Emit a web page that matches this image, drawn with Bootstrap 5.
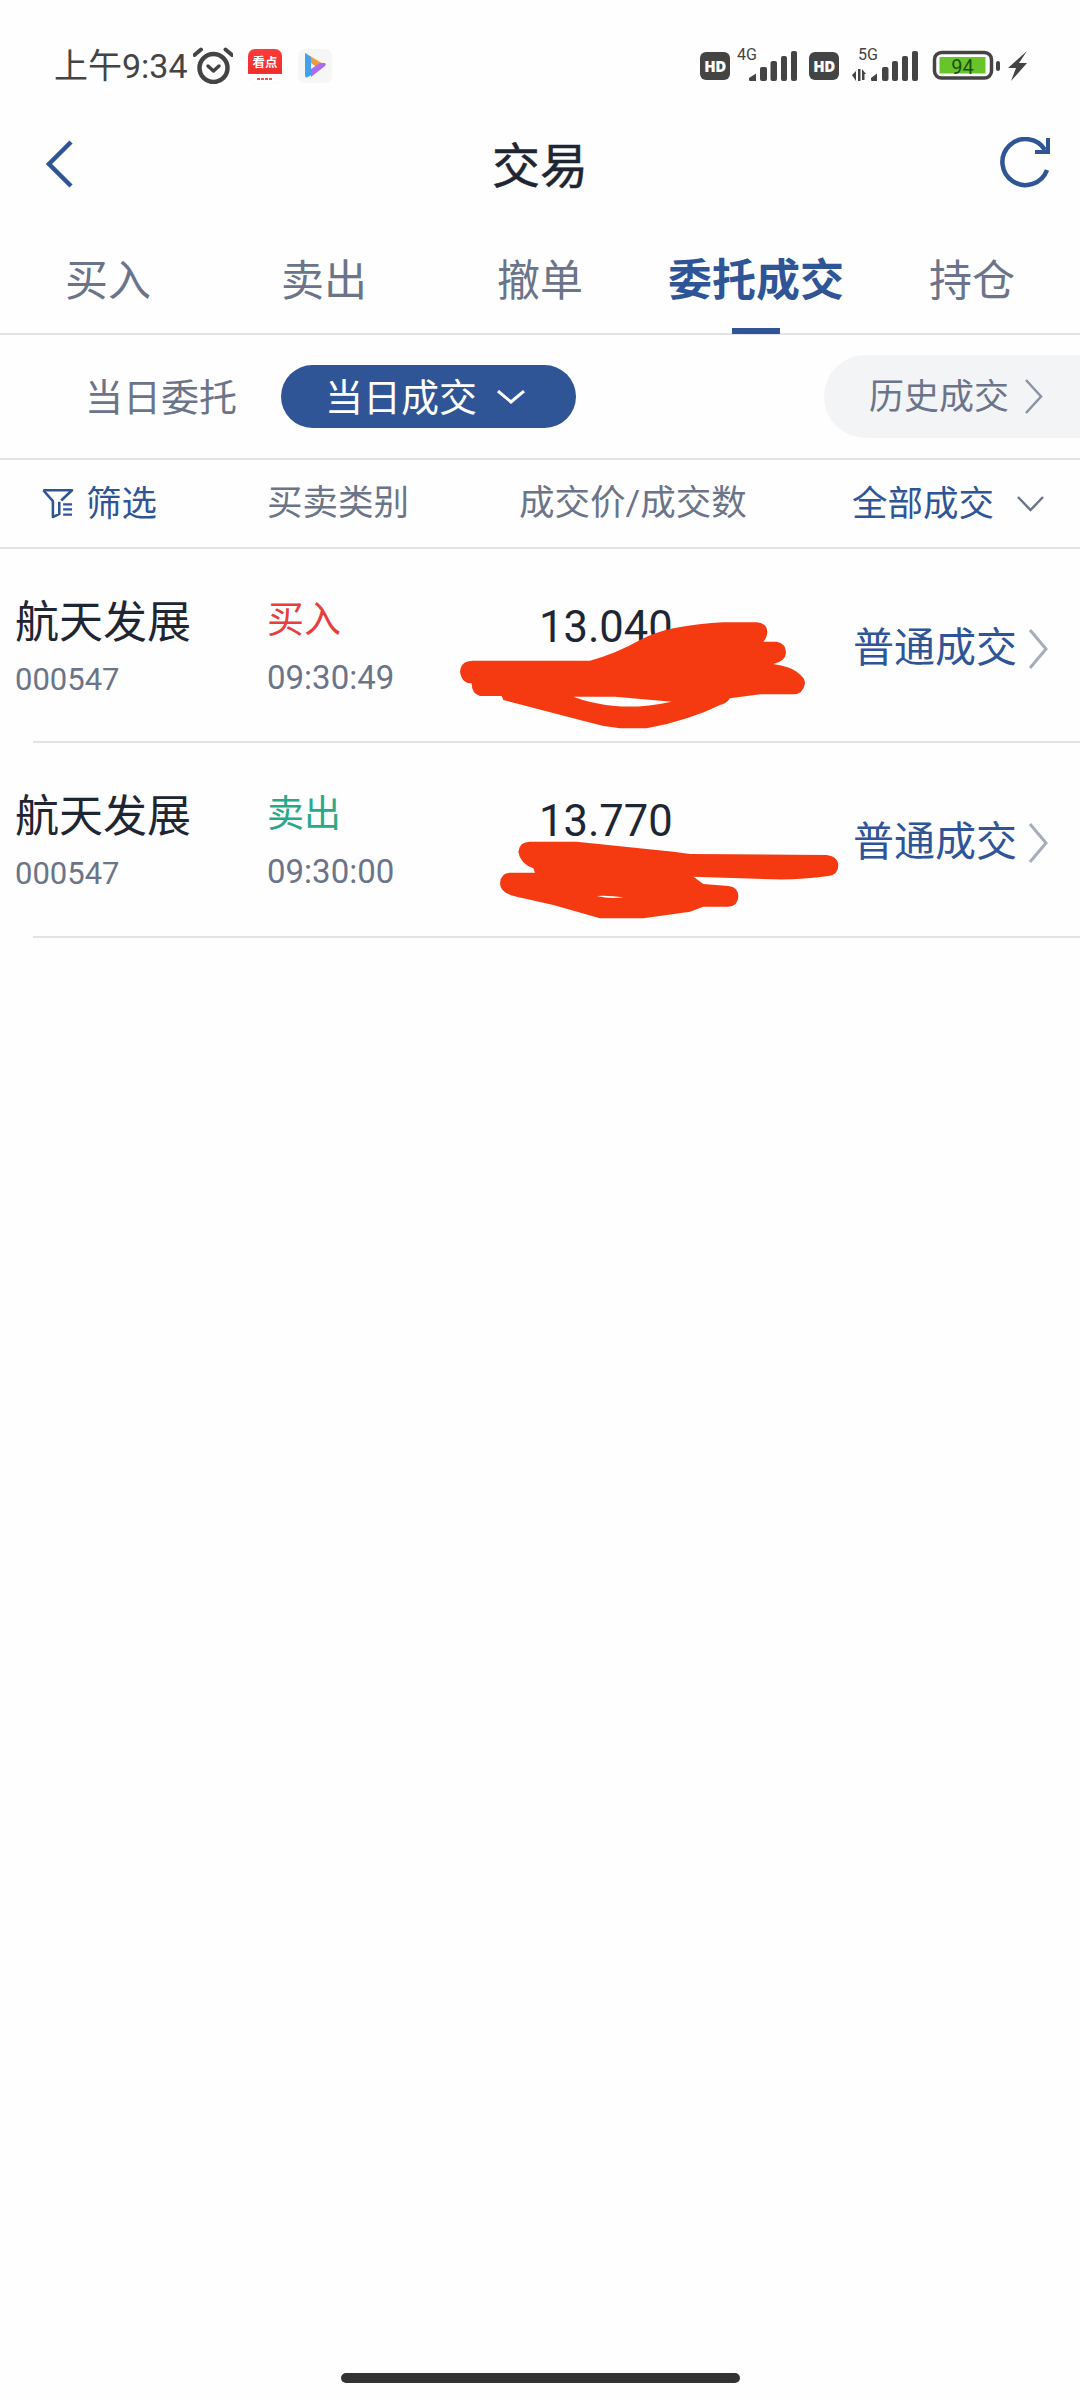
<!DOCTYPE html>
<html lang="zh-CN">
<head>
<meta charset="utf-8">
<title>交易</title>
<link rel="stylesheet" href="https://cdn.jsdelivr.net/npm/bootstrap@5.3.0/dist/css/bootstrap.min.css">
<style>
:root{--blue:#2f5597;--gray:#6b7488;--ink:#1f2633;--line:#e2e3e6}
body{font-family:Roboto,"Noto Sans CJK SC",sans-serif;background:#fefefe;color:var(--ink);width:1080px;min-height:2400px;overflow-x:hidden}
svg{display:block;flex:none}
.phone{min-height:2400px}
.stat{height:110px;padding:47px 0 0 54px;color:#444}
.clock{font-size:34px;line-height:38px;width:133px;white-space:nowrap}
.ic-alarm{margin-left:6px}
.app-kd{position:relative;width:34px;height:34px;margin:2px 0 0 15px;border-radius:7px;background:linear-gradient(#fe3b3b 0,#f02d2d 72%,#fff 73%);color:#fff;font-size:12.500px;font-weight:700;line-height:28px;text-align:center;box-shadow:0 0 1px #ddd}
.app-kd::after{content:"";position:absolute;left:9px;right:9px;bottom:3px;height:2px;background:repeating-linear-gradient(90deg,#e8534f 0 3px,#fff 3px 4px)}
.app-play{width:34px;height:34px;margin:2px 0 0 16px;border-radius:7px;background:#f6f6f7}
.stat-right{margin-left:368px;margin-top:2px}
.hd-tag{width:30px;height:28px;margin-top:3px;border-radius:6px;background:#444;color:#fff;font-family:"Open Sans",sans-serif;font-size:15px;font-weight:800;line-height:28px;text-align:center;letter-spacing:-.5px}
.sig{margin-top:-8px}
.titlebar{height:108px;position:relative}
.title-txt{font-size:48px;font-weight:400;line-height:1;padding-top:5px;-webkit-text-stroke:.5px var(--ink)}
.tbtn{position:absolute;top:0;bottom:0;display:flex;align-items:center}
.tabbar{height:117px;border-bottom:2px solid var(--line)}
.tabbar .nav-link{position:relative;height:115px;padding:38px 0 0;font-size:43px;line-height:50px;color:var(--gray)}
.tabbar .nav-link.active{color:var(--blue);font-weight:700;font-size:44px}
.tabbar .nav-link.active::after{content:"";position:absolute;left:50%;bottom:-1px;width:48px;height:6px;margin-left:-24px;background:var(--blue)}
.subbar{height:125px;border-bottom:2px solid var(--line)}
.sub-off{margin-left:85px;width:196px;font-size:38px;color:var(--gray);padding-top:4px}
.sub-on{width:295px;height:63px;padding:0 0 0 44px;border:0;border-radius:32px;background:var(--blue);color:#fff;font-size:38px;line-height:63px;gap:20px}
.sub-on span{padding-top:4px}
.sub-his{margin-left:auto;width:256px;height:83px;padding-left:45px;border-radius:42px 0 0 42px;background:#f3f4f6;color:var(--gray);font-size:35px;gap:15px}
.sub-his span{padding-top:3px}
.headrow{display:grid;grid-template-columns:267px 252px 333px 228px;height:89px;border-bottom:2px solid var(--line);font-size:35.500px;color:var(--gray)}
.headrow span{padding-top:3px}
.link-c{color:var(--blue)}
.tradewrap{position:relative;height:192px}
.tradewrap.second{height:193px}
.traderow{display:grid;grid-template-columns:267px 271px 315px 227px;height:100%;padding-top:47px}
.nm{padding-left:15px;font-size:44px;line-height:54px;white-space:nowrap}
.cd{padding-left:15px;margin-top:13px;font-size:31px;line-height:34px;color:var(--gray)}
.kind{margin-top:-2px;font-size:37px;line-height:54px}
.buy{color:#e83e3e}.sell{color:#2aa98a}
.tm{margin-top:13px;font-size:33px;line-height:34px;color:var(--gray)}
.px{font-size:43.500px;line-height:54px;margin:5px 0 0 1px}
.st{height:199px;margin-top:-47px;font-size:41px;color:var(--blue);gap:11px}
.rowline{height:2px;margin-left:33px;background:var(--line)}
.smear{position:absolute}
.homebar{width:399px;height:10px;margin:0 auto 17px;border-radius:5px;background:#333}
</style>
</head>
<body>
<div class="phone d-flex flex-column">
  <div class="stat d-flex align-items-start">
    <div class="clock">上午9:34</div>
    <svg class="ic-alarm" width="40" height="37" viewBox="0 0 40 37" fill="none" stroke="#444" stroke-linecap="round"><circle cx="20.5" cy="21" r="14" stroke-width="4.5"/><path d="M1.5 8 8 2.5M39 8 32.500 2.500" stroke-width="4"/><path d="M15 19l5.500 5 5.500-5" stroke-width="3.500" stroke-linejoin="round"/></svg>
    <div class="app-kd">看点</div>
    <div class="app-play d-flex align-items-center justify-content-center">
      <svg width="22" height="28" viewBox="0 0 22 28"><path d="M1 1l20 12-6 4-8-6z" fill="#f39a3c"/><path d="M1 1l6 4v18l-3 2c-2 1-3 0-3-2z" fill="#3fa2ea"/><path d="M21 11c1 1 1 2 0 3L7 25v-8l9-6z" fill="#a96cf0"/></svg>
    </div>
    <div class="stat-right d-flex align-items-start">
      <div class="hd-tag">HD</div>
      <svg class="sig ms-1" width="63" height="42" viewBox="734 42 63 42"><text x="737" y="61" font-family="Roboto" font-size="16" fill="#444">4G</text><g fill="#444"><path d="M749 79l7-4.500V82h-6q-1 0-1-1z"/><rect x="760" y="68" width="7" height="14" rx="2"/><rect x="770.500" y="62" width="6.500" height="20" rx="2"/><rect x="781" y="57" width="6" height="25" rx="2"/><rect x="791" y="52" width="6" height="30" rx="2"/></g></svg>
      <div class="hd-tag" style="margin-left:12px">HD</div>
      <svg class="sig" style="margin-left:12px" width="67" height="42" viewBox="851 42 67 42"><text x="858" y="61" font-family="Roboto" font-size="16" fill="#444">5G</text><g fill="#444"><path d="M852 76l4-4v10zM858 70h2.500v12H858zM862 70l4 5h-1.500v6H862z"/><path d="M871 79l6-4.500V82h-5q-1 0-1-1z"/><rect x="882" y="68" width="6.500" height="14" rx="2"/><rect x="892" y="62" width="6" height="20" rx="2"/><rect x="902" y="57" width="6" height="25" rx="2"/><rect x="912" y="52" width="6" height="30" rx="2"/></g></svg>
      <svg style="margin-left:14px" width="96" height="34" viewBox="932 50 96 34"><rect x="934.500" y="53.500" width="57" height="25.500" rx="7" fill="#fff" stroke="#444" stroke-width="3.500"/><rect x="939.500" y="58" width="46" height="16.500" fill="#67c52a"/><text x="962.500" y="74.500" text-anchor="middle" font-family="Roboto" font-size="20" fill="#1c4d12">94</text><rect x="996" y="62" width="4" height="10" rx="2" fill="#444"/><path d="M1027 52l-19 17h8l-5 13 16-18h-8z" fill="#444"/></svg>
    </div>
  </div>

  <div class="titlebar d-flex align-items-center justify-content-center">
    <div class="title-txt">交易</div>
    <a class="tbtn" style="left:44px" href="#" aria-label="返回"><svg width="32" height="50" viewBox="0 0 32 50" fill="none" stroke="#2f5597" stroke-width="4.500"><path d="M27 3 5 25l22 22"/></svg></a>
    <a class="tbtn" style="right:27px" href="#" aria-label="刷新"><svg width="54" height="54" viewBox="0 0 54 54" fill="none" stroke="#2f5597" stroke-width="4.500"><path d="M48 33A23 23 0 1 1 46 13"/><path d="M49 1v14H36" stroke-width="4"/></svg></a>
  </div>

  <ul class="nav nav-justified tabbar">
    <li class="nav-item"><a class="nav-link" href="#">买入</a></li>
    <li class="nav-item"><a class="nav-link" href="#">卖出</a></li>
    <li class="nav-item"><a class="nav-link" href="#">撤单</a></li>
    <li class="nav-item"><a class="nav-link active" href="#">委托成交</a></li>
    <li class="nav-item"><a class="nav-link" href="#">持仓</a></li>
  </ul>

  <div class="subbar d-flex align-items-center">
    <div class="sub-off">当日委托</div>
    <button class="sub-on btn d-flex align-items-center" type="button"><span>当日成交</span><svg width="28" height="14" viewBox="0 0 28 14" fill="none" stroke="#fff" stroke-width="3"><path d="M1 1l13 11L27 1"/></svg></button>
    <div class="sub-his d-flex align-items-center"><span>历史成交</span><svg width="19" height="35" viewBox="0 0 19 35" fill="none" stroke="#8a92a3" stroke-width="2.500"><path d="M2 1l15 16.500L2 34"/></svg></div>
  </div>

  <div class="headrow align-items-center">
    <div class="link-c d-flex align-items-center" style="padding-left:42px;gap:12px">
      <svg width="32" height="30" viewBox="0 0 100 94" fill="none" stroke="#2f5597" stroke-width="8" stroke-linejoin="round"><path d="M4 4h90L60 36"/><path d="M4 4l30 34v50l20-10V40"/><path d="M66 48h28M66 64h28M66 80h28" stroke-width="7"/></svg>
      <span>筛选</span>
    </div>
    <div><span>买卖类别</span></div>
    <div><span>成交价/成交数</span></div>
    <div class="link-c d-flex align-items-center" style="gap:23px"><span>全部成交</span><svg width="27" height="16" viewBox="0 0 27 16" fill="none" stroke="#6b7488" stroke-width="2.500"><path d="M1 1l12.500 13L26 1"/></svg></div>
  </div>

  <div class="tradewrap">
    <div class="traderow">
      <div><div class="nm">航天发展</div><div class="cd">000547</div></div>
      <div><div class="kind buy">买入</div><div class="tm">09:30:49</div></div>
      <div class="px">13.040</div>
      <div class="st d-flex align-items-center">普通成交<svg width="20" height="40" viewBox="0 0 20 40" fill="none" stroke="#a6adba" stroke-width="3"><path d="M2 1l16 19L2 39"/></svg></div>
    </div>
    <svg class="smear" style="left:440px;top:41px" width="400" height="150" viewBox="0 0 1200 450"><path fill="#f53a12" fill-rule="evenodd" d="M60 245Q62 212 100 212H450Q530 190 600 150Q650 125 700 115Q780 100 850 97H950Q982 100 982 127Q980 145 970 155H1010Q1038 160 1038 190Q1035 215 1000 222Q1050 230 1070 245Q1097 265 1095 280Q1090 313 1060 313H960L870 325Q860 340 840 345Q790 370 740 385Q680 405 620 415H540Q490 410 440 395L190 330L185 318H120Q95 312 95 280Q65 280 60 245ZM400 320Q450 340 525 348Q600 355 695 335L525 320Z"/></svg>
  </div>
  <div class="rowline"></div>

  <div class="tradewrap second">
    <div class="traderow">
      <div><div class="nm">航天发展</div><div class="cd">000547</div></div>
      <div><div class="kind sell">卖出</div><div class="tm">09:30:00</div></div>
      <div class="px">13.770</div>
      <div class="st d-flex align-items-center">普通成交<svg width="20" height="40" viewBox="0 0 20 40" fill="none" stroke="#a6adba" stroke-width="3"><path d="M2 1l16 19L2 39"/></svg></div>
    </div>
    <svg class="smear" style="left:480px;top:57px" width="400" height="130" viewBox="0 0 1200 390"><path fill="#f53a12" fill-rule="evenodd" d="M115 155Q118 125 150 125H290L580 155L630 162L1040 165Q1075 170 1075 195Q1075 225 1045 228Q960 240 880 238L640 230L670 252L745 258Q775 262 775 288Q775 318 745 320H670L630 335L490 355H360L220 315L110 290Q60 280 60 250Q62 218 90 218H165L160 205Q120 190 115 155ZM350 288Q390 298 430 292Q390 286 350 288Z"/></svg>
  </div>
  <div class="rowline"></div>

  <div class="flex-grow-1"></div>
  <div class="homebar"></div>
</div>
<script src="https://cdn.jsdelivr.net/npm/bootstrap@5.3.0/dist/js/bootstrap.bundle.min.js"></script>
</body>
</html>
